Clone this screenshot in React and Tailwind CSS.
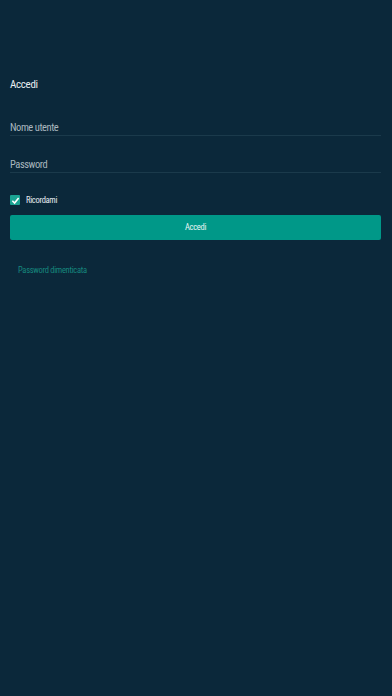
import React from 'react'

const font = { fontFamily: '"Liberation Sans Narrow", "Roboto Condensed", "Liberation Sans", Arial, sans-serif' }

export default function App() {
  return (
    <div className="min-h-[696px] w-full bg-[#0b283a] px-[10px] pt-[77px] text-white" style={font}>
      <h1 className="text-[11px] leading-[16px] tracking-[-0.3px] text-[#e8eef1]">Accedi</h1>

      <div className="mt-[28px] flex w-[371px] flex-col">
        <div className="border-b border-[#1b3a4b] pb-[1px] text-[10.5px] leading-[13px] tracking-[-0.45px] text-[#a9b7bf]">
          Nome utente
        </div>
        <div className="mt-[22px] border-b border-[#1b3a4b] pb-[1px] text-[10.5px] leading-[13px] tracking-[-0.45px] text-[#a9b7bf]">
          Password
        </div>
      </div>

      <label className="mt-[21px] flex items-center gap-[6px]">
        <span className="flex h-[10px] w-[10px] items-center justify-center rounded-[1px] bg-[#1ba393]">
          <svg viewBox="0 0 10 10" className="h-[9px] w-[9px]" fill="none" stroke="white" strokeWidth="1.8">
            <path d="M1.5 5.3 L4 7.8 L8.5 2.2" />
          </svg>
        </span>
        <span className="text-[8.5px] font-normal tracking-[-0.3px] text-[#e8eef1]">Ricordami</span>
      </label>

      <button className="mt-[8px] flex h-[25px] w-[371px] items-center justify-center rounded-[2px] bg-[#009888] text-[8.5px] tracking-[-0.3px] text-[#e8f6f4]">
        Accedi
      </button>

      <div className="mt-[24px] pl-[8px] text-[8.5px] tracking-[-0.3px] text-[#16877d]">Password dimenticata</div>
    </div>
  )
}
